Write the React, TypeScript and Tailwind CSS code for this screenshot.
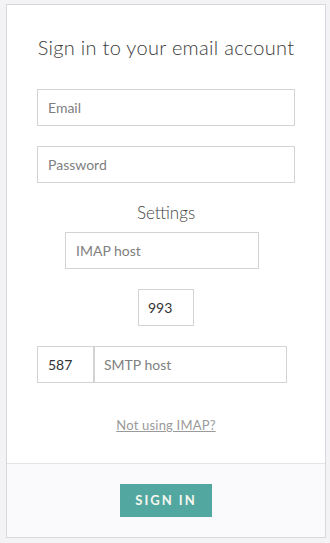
import React from "react";

export default function App() {
  const font = { fontFamily: "Lato, 'Open Sans', sans-serif" };
  return (
    <div className="w-[330px] h-[543px] bg-[#f3f3f5] pt-[4px] pl-[6px]" style={font}>
      <div className="w-[320px] h-[534px] border border-[#d8d8dc] bg-white flex flex-col">
        <div className="h-[458px] px-[30px] flex flex-col">
          <h1 className="mt-[28px] h-[28px] leading-[28px] text-center text-[20px] font-light text-[#3a3a3a] tracking-[0.3px]">
            Sign in to your email account
          </h1>
          <div className="mt-[28px] h-[37px] w-[258px] border border-[#d3d3d3] flex items-center pl-[10px] text-[14px] text-[#808080]">
            Email
          </div>
          <div className="mt-[20px] h-[37px] w-[258px] border border-[#d3d3d3] flex items-center pl-[10px] text-[14px] text-[#808080]">
            Password
          </div>
          <div className="mt-[20px] h-[20px] leading-[20px] text-center text-[17px] font-light text-[#444]">
            Settings
          </div>
          <div className="mt-[9px] ml-[28px] h-[37px] w-[194px] border border-[#d3d3d3] flex items-center pl-[10px] text-[14px] text-[#808080]">
            IMAP host
          </div>
          <div className="mt-[20px] ml-[101px] h-[37px] w-[56px] border border-[#d3d3d3] flex items-center pl-[9px] text-[14px] text-[#333]">
            993
          </div>
          <div className="mt-[20px] flex">
            <div className="h-[37px] w-[57px] border border-[#d3d3d3] flex items-center pl-[10px] text-[14px] text-[#333]">
              587
            </div>
            <div className="h-[37px] w-[193px] border border-[#d3d3d3] flex items-center pl-[9px] text-[14px] text-[#808080]">
              SMTP host
            </div>
          </div>
          <div className="mt-[34px] text-center text-[13px] leading-[16px] text-[#9a9a9a] underline tracking-[0.2px]">
            Not using IMAP?
          </div>
        </div>
        <div className="border-t border-[#e4e4e8] flex-1 bg-[#fafafc] flex items-start justify-center pt-[20px]">
          <div className="w-[92px] h-[33px] bg-[#52a8a0] flex items-center justify-center text-[13px] font-bold tracking-[2px] text-[#f7f7ef]">
            SIGN IN
          </div>
        </div>
      </div>
    </div>
  );
}
